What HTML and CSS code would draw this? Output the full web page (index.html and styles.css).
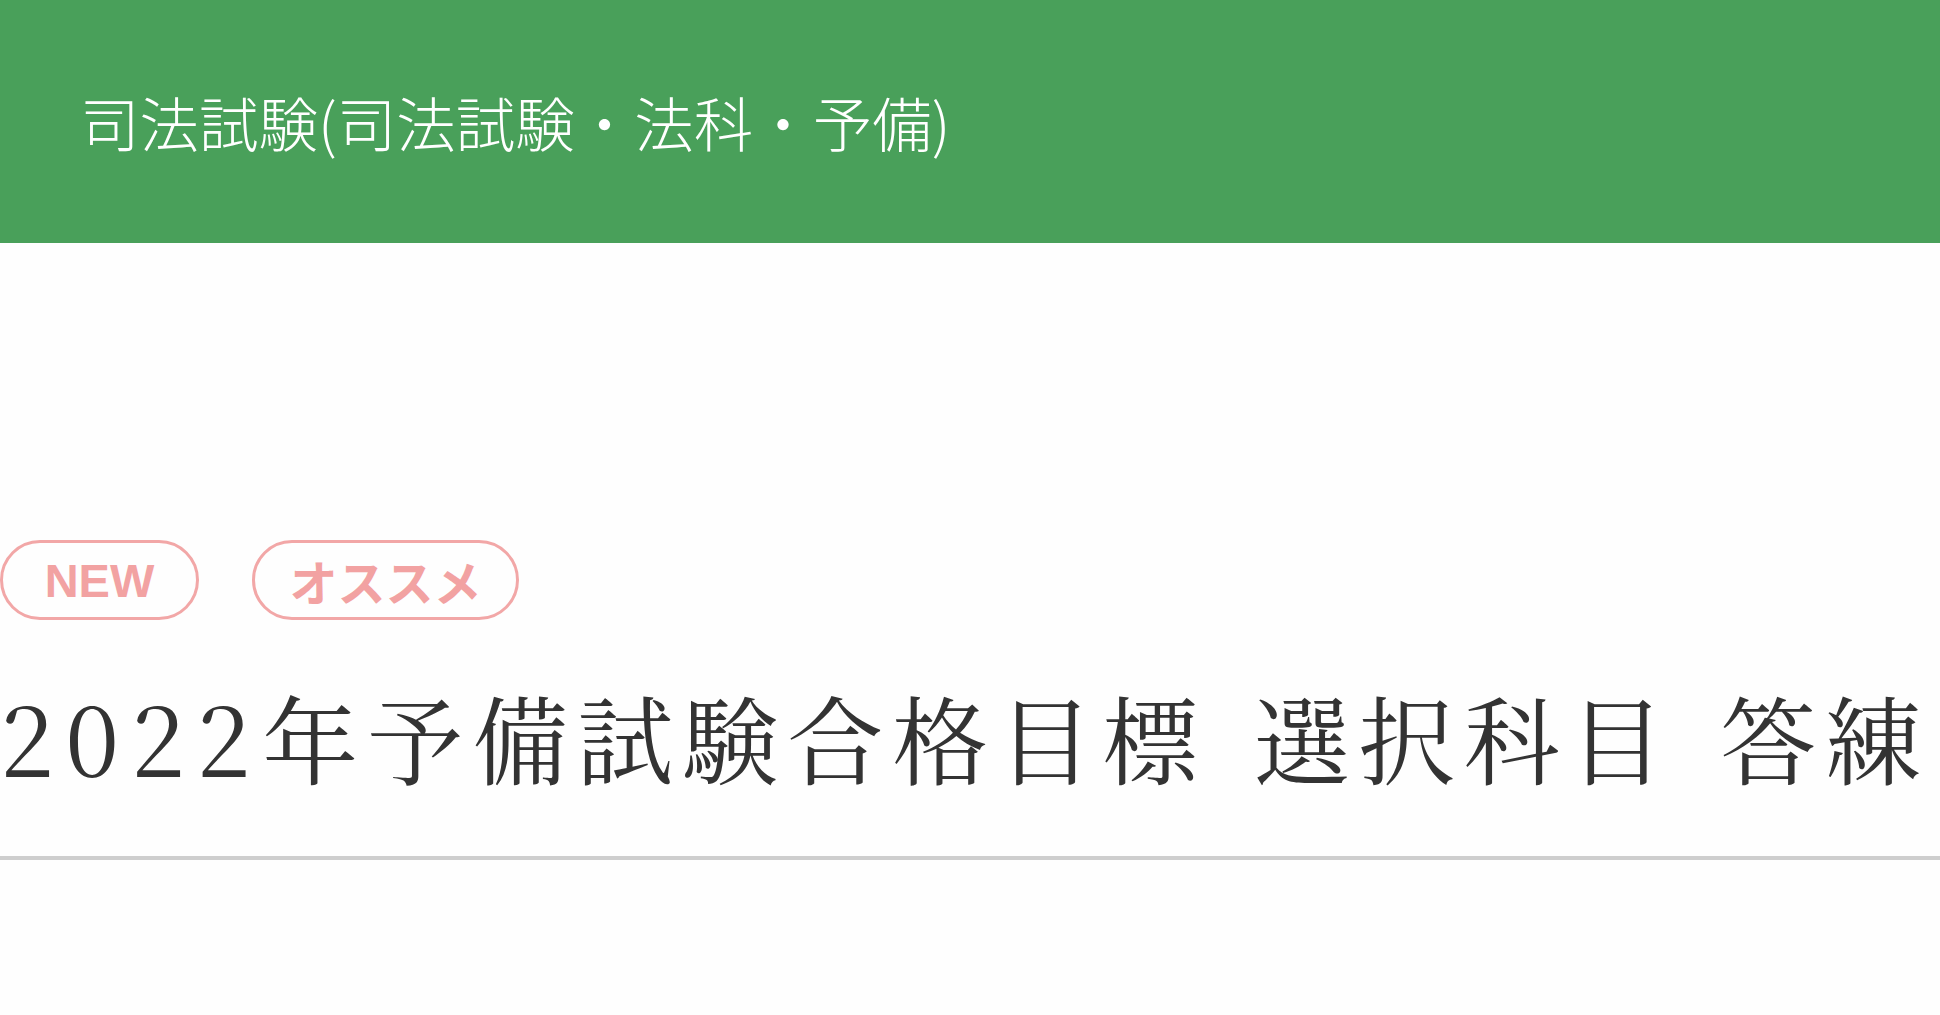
FILE: index.html
```html
<!DOCTYPE html>
<html lang="ja">
<head>
<meta charset="utf-8">
<title>司法試験</title>
<link rel="stylesheet" href="styles.css">
</head>
<body>
<header class="site-header">
  <div class="site-title">司法試験(司法試験・法科・予備)</div>
</header>
<main class="content">
  <div class="tags">
    <span class="tag tag-new">NEW</span>
    <span class="tag tag-rec">オススメ</span>
  </div>
  <h1 class="title"><span class="year">2022</span>年予備試験合格目標 選択科目 答練</h1>
  <hr class="rule">
</main>
</body>
</html>
```
FILE: styles.css
```css
html, body {
  margin: 0;
  padding: 0;
  background: #fefefe;
  overflow: hidden;
}
body {
  width: 1940px;
  height: 1015px;
  font-family: "Noto Sans CJK JP", "Noto Sans", sans-serif;
}
.site-header {
  height: 243px;
  background: #49a05a;
  display: flex;
  align-items: center;
  padding-left: 80px;
  box-sizing: border-box;
}
.site-title {
  color: #ffffff;
  font-size: 59.5px;
  font-weight: 300;
  letter-spacing: 0;
  line-height: 1;
  padding-top: 1px;
}
.content {
  padding-top: 297px;
}
.tags {
  display: flex;
  gap: 53px;
  height: 80px;
}
.tag {
  display: flex;
  align-items: center;
  justify-content: center;
  box-sizing: border-box;
  height: 80px;
  border: 3px solid #f2a7a7;
  border-radius: 40px;
  color: #f2a2a2;
  font-weight: 700;
  line-height: 1;
}
.tag-new {
  width: 199px;
  font-family: "Liberation Sans", Arial, sans-serif;
  font-size: 47px;
}
.tag-rec {
  width: 267px;
  font-size: 48px;
  letter-spacing: 0;
}
.title {
  margin: 0;
  padding-top: 54px;
  font-family: "Noto Serif CJK JP", "Liberation Serif", serif;
  font-weight: 400;
  font-size: 96px;
  letter-spacing: 9px;
  word-spacing: 13px;
  line-height: 1.3;
  color: #333333;
  white-space: nowrap;
}
.year {
  letter-spacing: 12px;
}
.rule {
  margin: 57px 0 0 0;
  border: 0;
  height: 4px;
  background: #cecece;
}
```
